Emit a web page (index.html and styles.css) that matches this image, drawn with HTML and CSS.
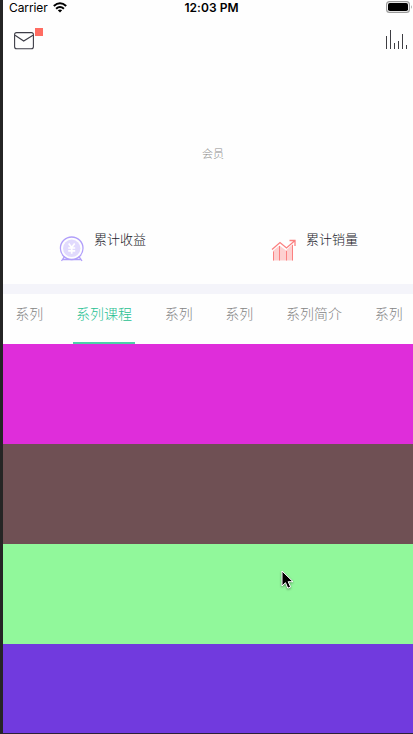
FILE: index.html
```html
<!DOCTYPE html>
<html lang="zh-CN">
<head>
<meta charset="utf-8">
<title>会员</title>
<link rel="stylesheet" href="styles.css">
</head>
<body>
<div class="screen">
  <header class="status">
    <div class="carrier"><span>Carrier</span>
      <svg class="wifi" width="14" height="11" viewBox="0 0 14 11" fill="none" stroke="#000" stroke-width="2"><path d="M.8 4.1Q7-1.5 13.2 4.1M3.1 6.7Q7 3.2 10.9 6.7"/><path d="M4.8 8.3Q7 6.6 9.2 8.3L7 10.5Z" fill="#000" stroke="none"/></svg>
    </div>
    <div class="time">12:03 PM</div>
    <svg class="battery" width="27" height="12" viewBox="0 0 27 12"><rect x=".6" y=".6" width="22.8" height="10.8" rx="3" fill="none" stroke="#999" stroke-width="1.1"/><rect x="2" y="2" width="20" height="8" rx="1.8"/><path d="M25 4v4q1.5-2 0-4" fill="#888"/></svg>
  </header>
  <nav class="toolbar">
    <div class="mail">
      <svg width="20" height="18" viewBox="0 0 20 18" fill="none" stroke="#3d3d47" stroke-width="1.1"><rect x=".6" y=".6" width="18.8" height="16.2" rx="2"/><path d="M1 3.2 9.7 9 19 3.2"/></svg>
      <i class="badge"></i>
    </div>
    <svg class="chart" width="22" height="19" viewBox="0 0 22 19" fill="none" stroke="#3d3d42" stroke-width="1"><path d="M.5 6v13M4.5 0v19M8.5 13v6M12.5 11v8M16.5 4v15M20.5 15v4"/></svg>
  </nav>
  <div class="member">会员</div>
  <section class="totals">
    <div class="total">
      <svg width="26" height="26" viewBox="0 0 26 26" fill="none" stroke="#b19ffa" stroke-width="1.3"><circle cx="12.7" cy="12.3" r="11.3"/><circle cx="12.7" cy="12.3" r="8.7" fill="#e1dafd" stroke="none"/><path d="M5.5 20.5 3.5 23.500 2.500 25M20 20.500l2 3 1 1.500M3 23.500h19.500"/><path d="m9.700 7.500 3 4 3-4M9.200 12h7M9.200 14.800h7M12.700 11.500v6.300" stroke="#fff" stroke-width="1.7"/></svg>
      <span>累计收益</span>
    </div>
    <div class="total">
      <svg width="26" height="26" viewBox="0 0 26 26" fill="none" stroke="#fb8080" stroke-width="1.2"><path d="M2 15 8.500 9.500l6.500 5 7-6.500v16.500H2Z" fill="#fdd0d0" stroke="none"/><path d="M2.500 15.500V24.500M8.500 10v14.500M15.500 15v9.500M21.500 9v15.500" stroke-width="1"/><path d="m1 13.500 8-7 6.500 5.500L24 4.500M18.500 4.500H24v5.500" stroke-width="1.3"/></svg>
      <span>累计销量</span>
    </div>
  </section>
  <div class="divider"></div>
  <nav class="tabs">
    <span>系列</span><span class="active">系列课程</span><span>系列</span><span>系列</span><span>系列简介</span><span>系列</span>
  </nav>
  <main>
    <div class="block magenta"></div>
    <div class="block brown"></div>
    <div class="block green"></div>
    <div class="block purple"></div>
  </main>
  <svg class="cursor" width="14" height="21" viewBox="0 0 14 21"><path d="M1 1v15l3.500-3.300 2.300 5.500 2.800-1.200-2.400-5.300H12Z" stroke="#fff" stroke-width="1"/></svg>
</div>
</body>
</html>
```
FILE: styles.css
```css
* { box-sizing: border-box; }
body { margin: 0; background: #fefefe; overflow: hidden; font-family: "Noto Sans CJK SC", sans-serif; font-weight: 300; }
svg { display: block; flex: none; }
.screen { position: relative; width: 413px; height: 734px; border-left: 3px solid #252525; border-bottom: 1px solid #2b2038; overflow: hidden; display: flex; flex-direction: column; }
.status { height: 16px; flex: none; display: grid; grid-template-columns: 150px 117px 1fr; font: 12px/15px Inter, sans-serif; color: #000; }
.carrier { display: flex; padding-left: 6px; gap: 5px; letter-spacing: -.1px; }
.wifi { margin-top: 2px; }
.time { text-align: center; font-weight: 600; font-size: 12px; letter-spacing: .05px; }
.battery { justify-self: end; margin: 1px 0 0; }
.toolbar { height: 38px; flex: none; display: flex; justify-content: space-between; align-items: flex-start; padding: 14px 5px 0 11px; }
.mail { position: relative; margin-top: 2px; }
.badge { position: absolute; left: 21px; top: -4px; width: 8px; height: 8px; background: #ff6c62; }
.member { margin-top: 91px; padding-left: 10px; height: 16px; line-height: 16px; font-size: 11px; text-align: center; color: #8c8c8c; flex: none; }
.totals { height: 123px; flex: none; display: grid; grid-template-columns: 212px 1fr; padding: 69px 0 0 56px; color: #18181e; font-size: 13px; line-height: 20px; }
.total { display: flex; gap: 9px; }
.total svg { margin-top: 6px; }
.total span { margin-top: -1px; white-space: nowrap; }
.divider { height: 10px; flex: none; background: #f4f4fa; }
.tabs { height: 50px; flex: none; display: flex; gap: 26.7px; padding-left: 9.3px; color: #858585; font-size: 14px; line-height: 20px; white-space: nowrap; }
.tabs span { flex: none; padding: 9px 3px 0; }
.tabs .active { color: #28c092; border-bottom: 2px solid #4dcfa8; }
.block { height: 100px; }
.magenta { background: #df2dda; }
.brown { background: #6f5054; }
.green { background: #91f89b; }
.purple { background: #713ade; }
.cursor { position: absolute; left: 278px; top: 570px; filter: drop-shadow(0 1px 1px #0006); }
```
